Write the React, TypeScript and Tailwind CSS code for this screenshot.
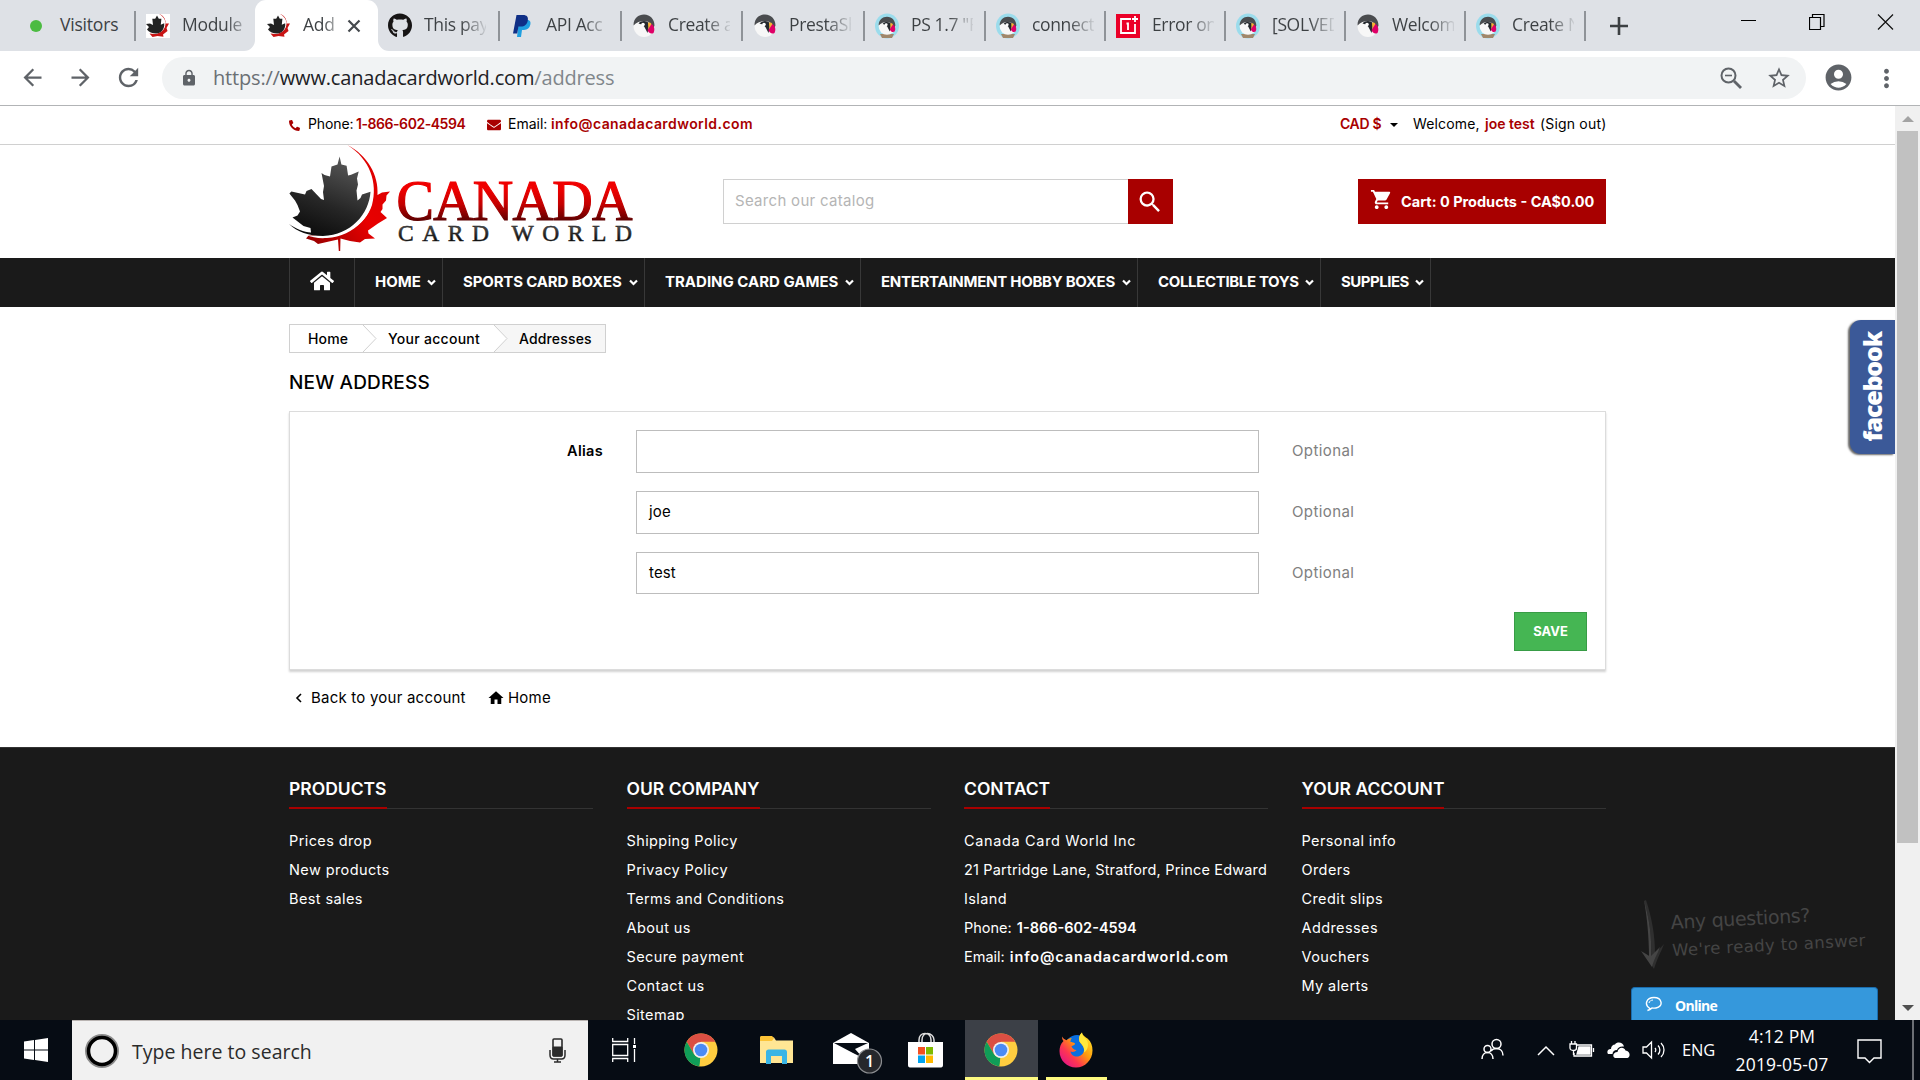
import { ReactNode } from "react";
import {
  MdAccountCircle,
  MdArrowBack,
  MdArrowForward,
  MdHome,
  MdLock,
  MdMoreVert,
  MdRefresh,
  MdSearch,
  MdShoppingCart,
  MdStarBorder,
} from "react-icons/md";
import { FaEnvelope, FaGithub, FaHome, FaPhone } from "react-icons/fa";

interface TabProps {
  title: string;
  icon: ReactNode;
  width: string;
}

/* ---------- Small drawings ---------- */

function LeafIcon() {
  return (
    <svg width="24" height="24" viewBox="0 0 24 24">
      <rect width="24" height="24" fill="#fff" />
      <path d="M13 0c6 3 8 10 4.500 15-2.500 4-8 6-14 4.500l3 3.500 5-1 6 .8-.5-2.300 4.500-3.500-1-3 2.500-4.500-3.500 0C20 5 17 1 13 0z" fill="#c81414" />
      <path d="M13 0c7 4 8 11 4.500 15.500-2.500 3-6.500 4.500-11 3.800 4 .2 8-1.500 10.200-4.300C20 11 19 4 13 0z" fill="#fff" />
      <path
        d="M11 1.500l1.800 3.200 2.600 0-.6 6 3.400-1.500c.6 6-3 10-8 10.300C6 19.500 3 18 1 15.500L3 13 0 10l4-.5 3 1.500L6.300 4.700l2.900 0z"
        fill="#222"
      />
    </svg>
  );
}

function PayPalIcon() {
  return (
    <svg width="18" height="22" viewBox="0 0 18 22">
      <path d="M6 5h8c3 0 4 2 3.300 4.800C16.500 13 14.500 15 11 15H9l-1 7H4z" fill="#1f9fe0" />
      <path d="M3.500 0H10c4 0 5.500 2.200 4.800 5.500C14 9.500 11.500 11.500 8 11.500H5.500L4.200 18.500H0z" fill="#0f2f86" />
    </svg>
  );
}

function PuffinIcon({ framed = false }: { framed?: boolean }) {
  return (
    <svg width="24" height="26" viewBox="0 0 24 26">
      {framed && <ellipse cx="12" cy="13" rx="12" ry="12.500" fill="#9bdcec" />}
      {framed && <path d="M5 21h14l-2 4H7z" fill="#a0876b" />}
      <g transform={framed ? "translate(2.400 2.600) scale(.8)" : undefined}>
        <ellipse cx="12" cy="13" rx="10.500" ry="11" fill="#f7f7f7" />
        <path d="M1.500 12.500C1.500 5 6.500 1.500 12 1.500c6.500 0 10.500 5 10.500 11l-1.500 4-4-7C14 7 6 7.500 1.500 12.500z" fill="#4a4c4f" />
        <path d="M6.500 10.500c3-3.500 9-3 11 .5l-2 9-2-4c-1-3-3.500-5-7-5.500z" fill="#24282d" />
        <circle cx="11" cy="11.500" r="1.800" fill="#fff" />
        <path d="M16 10c2-1 3.500 0 3.500 2l-3 5z" fill="#f8b334" />
        <path d="M15.500 17l4-6c3 2 3.500 6 2 9-2.500 1.500-5 0-6-3z" fill="#df0067" />
      </g>
    </svg>
  );
}

function OnePlusIcon() {
  return (
    <svg width="24" height="24" viewBox="0 0 24 24">
      <rect width="24" height="24" fill="#eb0028" />
      <path d="M15 5H5v14h14V10M19 2v6M16 5h6M10.500 9.500h1.500V16" fill="none" stroke="#fff" strokeWidth="1.800" />
    </svg>
  );
}

function ChromeIcon() {
  return (
    <svg width="34" height="34" viewBox="0 0 34 34">
      <circle cx="17" cy="17" r="16.500" fill="#ffcd40" />
      <path d="M2.700 8.700A16.500 16.500 0 0 1 31.300 8.700H17l-7.200 12.400z" fill="#db4f43" />
      <path d="M2.700 8.700l7.200 12.400c1.500 2.400 4 3.800 7.100 3.800l-1.500 8.600A16.500 16.500 0 0 1 2.700 8.700z" fill="#109d58" />
      <path d="M15.500 33.500l8.600-12.500L17 17z" fill="#ffcd40" />
      <circle cx="17" cy="17" r="8" fill="#f1f1f1" />
      <circle cx="17" cy="17" r="6.300" fill="#4c8bf5" />
    </svg>
  );
}

function FirefoxIcon() {
  return (
    <svg width="34" height="36" viewBox="0 0 34 36">
      <defs>
        <linearGradient id="fx" x1="0.900" y1="0.100" x2="0.100" y2="0.900">
          <stop offset="0" stopColor="#ffe226" />
          <stop offset=".4" stopColor="#ff980e" />
          <stop offset=".7" stopColor="#ff3750" />
          <stop offset="1" stopColor="#e31587" />
        </linearGradient>
      </defs>
      <circle cx="18" cy="15" r="12" fill="#0a6fe0" />
      <path
        d="M3 4.500c0 2 .6 3.500 1.500 4.500C1.500 12 .5 15.500.5 19 .5 28.500 8 35.500 17 35.500S33.500 28 33.500 18.500c0-5-1.500-8.500-4.500-11.500-2-2-5.500-3-6-6.500-3 2.500-3.500 6-2.500 9 2 3.500 5 5 4.500 9-.5 3.500-3.500 6-7 6s-6-2-6.500-5c2 1 4.500.5 6-1.500-3 0-4-2-5-3.500 1-1.500 3.500-1 3.500-3-1-1-3-1.500-4.500-1.500 0-1.500.3-3 1.500-4-2.500 0-4 1-5.500 2.200C5.500 7.500 4 6.500 3 4.500z"
        fill="url(#fx)"
      />
      <path d="M23 .5c-3 3-3.500 6-2.500 9 2.500 3 5.500 6 4.500 11 3-2 5-6 3.500-11C27 6 23 4 23 .5z" fill="#ffe83b" />
    </svg>
  );
}

function LogoMark() {
  return (
    <svg width="344" height="107" viewBox="0 0 344 107">
      <defs>
        <linearGradient id="leafDark" x1="0.700" y1="0" x2="0.300" y2="1">
          <stop offset="0" stopColor="#5a5a5a" />
          <stop offset=".6" stopColor="#262626" />
          <stop offset="1" stopColor="#0c0c0c" />
        </linearGradient>
        <linearGradient id="leafRed" x1="1" y1="0" x2="0" y2="1">
          <stop offset="0" stopColor="#d80000" />
          <stop offset=".5" stopColor="#e80000" />
          <stop offset="1" stopColor="#8c0000" />
        </linearGradient>
        <linearGradient id="wordRed" x1="0" y1="0" x2="0" y2="1">
          <stop offset=".3" stopColor="#ef0000" />
          <stop offset=".55" stopColor="#c40000" />
          <stop offset=".82" stopColor="#5a0000" />
        </linearGradient>
        <linearGradient id="wordDark" x1="0" y1="0" x2="0" y2="1">
          <stop offset=".3" stopColor="#4a4a4a" />
          <stop offset=".8" stopColor="#0a0a0a" />
        </linearGradient>
      </defs>
      <path
        d="M58.400 0C78 10 90 30 88.500 50l4.500-2.500 8-1-3.500 4-.5 5-3.500 4 0 4.500-2 3 6.500 6-9 5.500-10 7 .5 3 6.500 5-10 .5-5 3.500-10-1.500-9.500-2.500L51.200 106h-1.400L49 94.500l-9 2-11 2.500-4-3-8-2.500 3-3.500C50 94 75 84 83 60c6-22-2-46-24.600-60z"
        fill="url(#leafRed)"
      />
      <path d="M84 46c1 24-18 45-46 47-8 .6-15-.5-21-3l9 1c28-1 50-20 54-46z" fill="#fff" />
      <path
        d="M50.600 11.500l1.800 8 5.200 1.300 1.500 9.700 3-.7 7.600-3.300-1.700 7 1 6-1.500 6 1 10 3-2.500 1.500-3.500 8.500-2.700C80 69 62 90 34 91c-14 0-26-4-34-12 7 5 15 8 22 8.500l-.5-4.500-7-2-11-8.500 5-2 2.500-4-2.500-6.500-2.500-4.500L.4 48.500l2-2 13.600 3 1.500-3.500 5-2 9.500 10 3 1-1-8 1-6-2.500-13 3 2 5.500 1.500 1.500-10 6-2z"
        fill="url(#leafDark)"
      />
      <text
        x="107.500"
        y="75.300"
        textLength="236"
        fontFamily="Liberation Serif, serif"
        fontSize="56"
        fill="url(#wordRed)"
        stroke="url(#wordRed)"
        strokeWidth="1.200"
      >
        CANADA
      </text>
      <text
        x="109"
        y="95.500"
        textLength="234"
        fontFamily="Liberation Serif, serif"
        fontSize="23.500"
        fill="url(#wordDark)"
        stroke="#222"
        strokeWidth=".5"
      >
        CARD WORLD
      </text>
    </svg>
  );
}

/* ---------- Browser chrome ---------- */

const TABS: TabProps[] = [
  { title: "This pay", icon: <FaGithub size={25} color="#171515" />, width: "w-[122px]" },
  { title: "API Acc", icon: <PayPalIcon />, width: "w-[122px]" },
  { title: "Create a", icon: <PuffinIcon />, width: "w-[121px]" },
  { title: "PrestaSh", icon: <PuffinIcon />, width: "w-[122px]" },
  { title: 'PS 1.7 "F', icon: <PuffinIcon framed />, width: "w-[121px]" },
  { title: "connect", icon: <PuffinIcon framed />, width: "w-[120px]" },
  { title: "Error on", icon: <OnePlusIcon />, width: "w-[120px]" },
  { title: "[SOLVED", icon: <PuffinIcon framed />, width: "w-[120px]" },
  { title: "Welcom", icon: <PuffinIcon />, width: "w-[120px]" },
  { title: "Create N", icon: <PuffinIcon framed />, width: "w-[120px]" },
];

function Tab({ title, icon, width }: TabProps) {
  return (
    <div className={`${width} flex h-[30px] shrink-0 items-center border-r-2 border-[#8f9398] pl-[10px]`}>
      <span className="flex w-6 shrink-0 justify-center">{icon}</span>
      <span className="mb-0.5 ml-3 w-[62px] overflow-hidden whitespace-nowrap bg-linear-to-r from-[#3c4043] from-60% to-[#3c4043]/10 bg-clip-text text-[17.500px] tracking-[-0.350px] text-transparent">
        {title}
      </span>
    </div>
  );
}

function TabStrip() {
  return (
    <div className="flex h-[51px] items-center bg-[#dee1e6] text-[#3c4043]">
      <div className="flex h-[30px] w-[136px] shrink-0 items-center border-r-2 border-[#8f9398] pl-[30px]">
        <span className="h-3 w-3 rounded-full bg-[#4cbb42]" />
        <span className="mb-0.5 ml-[18px] text-[17.500px] tracking-[-0.200px]">Visitors</span>
      </div>
      <div className="flex w-[119px] shrink-0 items-center pl-[10px]">
        <LeafIcon />
        <span className="mb-0.5 ml-3 w-[62px] overflow-hidden whitespace-nowrap bg-linear-to-r from-[#3c4043] from-70% to-[#3c4043]/30 bg-clip-text text-[17.500px] tracking-[-0.300px] text-transparent">
          Module
        </span>
      </div>
      <div className="relative flex h-full w-[123px] shrink-0 items-center rounded-t-[11px] bg-white pl-3">
        <svg className="absolute -left-[11px] bottom-0" width="11" height="11" viewBox="0 0 11 11">
          <path d="M11 0v11H0A11 11 0 0 0 11 0z" fill="#fff" />
        </svg>
        <svg className="absolute -right-[11px] bottom-0" width="11" height="11" viewBox="0 0 11 11">
          <path d="M0 0v11h11A11 11 0 0 1 0 0z" fill="#fff" />
        </svg>
        <LeafIcon />
        <span className="mb-0.5 ml-3 w-[33px] overflow-hidden whitespace-nowrap bg-linear-to-r from-[#3c4043] from-60% to-[#3c4043]/40 bg-clip-text text-[17.500px] tracking-[-0.300px] text-transparent">
          Add
        </span>
        <svg className="ml-[11px]" width="14" height="14" viewBox="0 0 14 14">
          <path d="M1.500 1.500l11 11M12.500 1.500l-11 11" stroke="#45494d" strokeWidth="2.200" />
        </svg>
      </div>
      {TABS.map((tab) => (
        <Tab key={tab.title} {...tab} />
      ))}
      <svg className="ml-6 shrink-0" width="18" height="18" viewBox="0 0 18 18">
        <path d="M9 0v18M0 9h18" stroke="#3c4043" strokeWidth="2.600" />
      </svg>
      {/* Window controls */}
      <div className="mb-2 ml-auto flex items-center pr-[26px]">
        <svg width="16" height="18" viewBox="0 0 16 18">
          <path d="M0 7.500h15" stroke="#000" />
        </svg>
        <svg className="ml-[52px]" width="16" height="16" viewBox="0 0 16 16">
          <path d="M.5 3.500h11v12H.5zM3.500 3.500V.5h11.500v12h-3.500" fill="none" stroke="#000" strokeWidth="1.200" />
        </svg>
        <svg className="ml-[52px]" width="17" height="16" viewBox="0 0 17 16">
          <path d="M1 .5l15 15M16 .5l-15 15" stroke="#111" strokeWidth="1.200" />
        </svg>
      </div>
    </div>
  );
}

function Toolbar() {
  return (
    <div className="flex h-[55px] items-center border-b border-[#b2b4b6] bg-white text-[#5f6368]">
      <MdArrowBack className="ml-[19px] mb-0.5" size={27} />
      <MdArrowForward className="ml-[21px] mb-0.5" size={27} />
      <MdRefresh className="ml-[20px] mb-0.5" size={29} />
      <div className="ml-[19px] flex h-[42px] w-[1644px] shrink-0 items-center rounded-full bg-[#f1f3f4]">
        <MdLock className="ml-[18px]" size={18} />
        <div className="ml-[15px] w-[420px] whitespace-nowrap text-[20px] tracking-[-0.180px] text-[#80868b]">
          <span className="text-[#6b7074]">https://</span>
          <span className="text-[#202124]">www.canadacardworld.com</span>/address
        </div>
        <svg className="ml-auto" width="22" height="22" viewBox="0 0 22 22" fill="none" stroke="#5f6368">
          <circle cx="8.500" cy="8.500" r="7" strokeWidth="2" />
          <path d="M14 14l7 7" strokeWidth="2.800" />
          <path d="M5 8.500h7" strokeWidth="1.600" />
        </svg>
        <MdStarBorder className="mr-[14px] ml-[24px]" size={26} />
      </div>
      <MdAccountCircle className="ml-[17px] mb-0.5" size={31} />
      <MdMoreVert className="ml-[18px]" size={29} />
    </div>
  );
}

/* ---------- Shop header ---------- */

function TopBar() {
  return (
    <div className="h-[39px] border-b border-[#d0d0d0]">
      <div className="ml-[289px] flex h-[35px] w-[1317px] items-center whitespace-nowrap text-[14px]">
        <FaPhone className="mt-1 -scale-x-100" size={11} color="#a80000" />
        <span className="ml-2 w-12 tracking-[-0.100px]">Phone:</span>
        <span className="w-[131px] font-semibold tracking-[-0.450px] text-[#a80000]">1-866-602-4594</span>
        <FaEnvelope className="mt-0.5" size={14} color="#a80000" />
        <span className="ml-[7px] w-[43px]">Email:</span>
        <span className="font-semibold tracking-[0.420px] text-[#a80000]">info@canadacardworld.com</span>
        <span className="ml-auto w-[50px] font-semibold tracking-[-0.350px] text-[#a80000]">CAD $</span>
        <span className="mt-0.5 border-x-4 border-t-4 border-x-transparent border-t-black" />
        <span className="ml-[15px] w-[72px] tracking-[0.150px]">Welcome,</span>
        <span className="w-[55px] font-semibold text-[#a80000]">joe test</span>
        <span className="w-[66px] tracking-[0.180px]">(Sign out)</span>
      </div>
    </div>
  );
}

function ShopHeader() {
  return (
    <div className="ml-[289px] flex h-[113px] w-[1317px]">
      <LogoMark />
      <div className="mt-[34px] ml-[90px] flex h-[45px] w-[450px]">
        <div className="flex w-[405px] items-center border border-r-0 border-[#d0d0d0] pl-[11px] text-[15px] tracking-[0.300px] text-[#b5b5b5]">
          Search our catalog
        </div>
        <button className="flex w-[45px] items-center justify-center bg-[#a80000] pr-0.5 text-white">
          <MdSearch size={28} />
        </button>
      </div>
      <button className="mt-[34px] ml-auto flex h-[45px] w-[248px] items-center bg-[#a80000] pl-3 text-white">
        <MdShoppingCart className="mb-1" size={23} />
        <span className="ml-2 whitespace-nowrap text-[14.500px] font-bold">Cart: 0 Products - CA$0.00</span>
      </button>
    </div>
  );
}

const NAV_ITEMS = [
  { label: "HOME", width: "w-[88px]", tracking: "tracking-normal" },
  { label: "SPORTS CARD BOXES", width: "w-[202px]", tracking: "tracking-[-0.150px]" },
  { label: "TRADING CARD GAMES", width: "w-[216px]", tracking: "tracking-normal" },
  { label: "ENTERTAINMENT HOBBY BOXES", width: "w-[277px]", tracking: "tracking-[-0.280px]" },
  { label: "COLLECTIBLE TOYS", width: "w-[183px]", tracking: "tracking-[-0.350px]" },
  { label: "SUPPLIES", width: "w-[110px]", tracking: "tracking-[-0.500px]" },
];

function NavBar() {
  return (
    <nav className="h-[49px] bg-[#1a1a1a]">
      <div className="ml-[289px] flex h-full text-white">
        <div className="flex w-[66px] items-center justify-center border-x border-[#383838] pb-1">
          <FaHome size={24} />
        </div>
        {NAV_ITEMS.map((item) => (
          <div
            key={item.label}
            className={`${item.width} flex shrink-0 items-center justify-between border-r border-[#383838] pr-[6px] pl-5`}
          >
            <span className={`${item.tracking} whitespace-nowrap text-[15px] font-bold`}>{item.label}</span>
            <svg width="9" height="7" viewBox="0 0 9 7">
              <path d="M1 1.500l3.500 3.500L8 1.500" fill="none" stroke="#fff" strokeWidth="2.200" />
            </svg>
          </div>
        ))}
      </div>
    </nav>
  );
}

/* ---------- Page body ---------- */

function CrumbArrow({ last = false }: { last?: boolean }) {
  return (
    <svg width="14" height="27" viewBox="0 0 14 27">
      {last && <path d="M0 0h14v27H0L13 13.500z" fill="#f6f6f6" />}
      <path d="M0 0l13 13.500L0 27" fill="none" stroke="#d0d0d0" />
    </svg>
  );
}

function Breadcrumb() {
  return (
    <div className="flex h-[29px] w-[317px] items-center border border-[#d0d0d0] text-[14px] font-medium tracking-[0.150px] whitespace-nowrap">
      <span className="w-[73px] pl-[18px]">Home</span>
      <CrumbArrow />
      <span className="w-[117px] pl-[11px] tracking-[0.280px]">Your account</span>
      <CrumbArrow last />
      <span className="flex h-full flex-1 items-center bg-[#f6f6f6] pl-[11px]">Addresses</span>
    </div>
  );
}

const FIELDS = [
  { label: "Alias", value: "", height: "h-[43px]" },
  { label: "", value: "joe", height: "h-[43px]" },
  { label: "", value: "test", height: "h-[42px]" },
];

function AddressForm() {
  return (
    <div className="mt-[17px] h-[259px] border border-[#dcdcdc] px-[17px] pt-[18px] shadow-[0_2px_2px_rgba(0,0,0,0.18)]">
      {FIELDS.map((field, i) => (
        <div key={i} className={`${field.height} mb-[18px] flex items-center text-[15px]`}>
          <span className="mb-0.5 w-[296px] text-right text-[14.500px] font-semibold tracking-[0.300px]">
            {field.label}
          </span>
          <div className="ml-[33px] flex h-full w-[623px] items-center border border-[#bdbdbd] pl-3 tracking-[0.150px]">
            {field.value}
          </div>
          <span className="ml-[33px] tracking-[0.400px] text-[#808080]">Optional</span>
        </div>
      ))}
      <button className="mr-px ml-auto flex h-[39px] w-[73px] items-center justify-center border border-[#389c46] bg-[#45b653] text-[13px] font-bold text-white">
        SAVE
      </button>
    </div>
  );
}

function FacebookTab() {
  return (
    <div className="absolute top-[214px] right-0 flex h-[134px] w-[45px] items-center justify-center rounded-l-[11px] bg-[#3b5998] shadow-[-2px_1px_2px_rgba(0,0,0,0.6)]">
      <span className="-rotate-90 font-['Open_Sans',sans-serif] text-[25px] font-extrabold tracking-[-1.200px] text-white">
        facebook
      </span>
    </div>
  );
}

/* ---------- Footer ---------- */

function FooterColumn({ title, children }: { title: string; children: ReactNode }) {
  return (
    <div className="w-[304px] shrink-0 text-[14.500px] leading-[29px] tracking-[0.400px]">
      <div className="mb-[17px] flex h-[61px] items-end border-b border-[#333]">
        <h4 className="-mb-px flex h-[36px] items-center border-b-2 border-[#a80000] pb-1 text-[17.500px] font-semibold tracking-normal whitespace-nowrap">
          {title}
        </h4>
      </div>
      {children}
    </div>
  );
}

function LinkList({ items }: { items: string[] }) {
  return (
    <ul>
      {items.map((item) => (
        <li key={item}>{item}</li>
      ))}
    </ul>
  );
}

function Footer() {
  return (
    <footer className="h-[273px] overflow-hidden border-t border-[#333] bg-[#1a1a1a] text-white">
      <div className="ml-[289px] flex gap-[33.500px]">
        <FooterColumn title="PRODUCTS">
          <LinkList items={["Prices drop", "New products", "Best sales"]} />
        </FooterColumn>
        <FooterColumn title="OUR COMPANY">
          <LinkList
            items={[
              "Shipping Policy",
              "Privacy Policy",
              "Terms and Conditions",
              "About us",
              "Secure payment",
              "Contact us",
              "Sitemap",
            ]}
          />
        </FooterColumn>
        <FooterColumn title="CONTACT">
          <p className="tracking-[0.650px]">Canada Card World Inc</p>
          <p className="tracking-[0.180px] whitespace-nowrap">21 Partridge Lane, Stratford, Prince Edward</p>
          <p>Island</p>
          <p className="tracking-normal">
            Phone: <b className="ml-px font-semibold">1-866-602-4594</b>
          </p>
          <p className="tracking-normal">
            Email: <b className="ml-px font-semibold tracking-[0.850px]">info@canadacardworld.com</b>
          </p>
        </FooterColumn>
        <FooterColumn title="YOUR ACCOUNT">
          <LinkList items={["Personal info", "Orders", "Credit slips", "Addresses", "Vouchers", "My alerts"]} />
        </FooterColumn>
      </div>
    </footer>
  );
}

function ChatWidget() {
  return (
    <div className="absolute right-[17px] bottom-0 w-[247px]">
      <div className="flex h-[88px] pl-[10px] text-[#454545]">
        <svg className="shrink-0" width="26" height="73" viewBox="0 0 26 73">
          <path d="M5 1c6 18 9 36 9 54l9-10c-3 8-7 15-10 25L2 53l8 5C11 38 8 18 3 2z" fill="#2f2f2f" />
          <path d="M3 1c5 18 8 36 7 56l9-9c-3 8-6 12-8 20L0 52l8 5C8 38 6 18 3 1z" fill="#454545" />
        </svg>
        <div className="mt-1 ml-[5px] -rotate-[3deg] font-['Comic_Sans_MS','DejaVu_Sans',sans-serif] whitespace-nowrap">
          <div className="text-[19px] leading-[28px] tracking-[-0.350px]">Any questions?</div>
          <div className="mt-[3px] text-[16.500px] leading-[24px] tracking-[0.400px]">We're ready to answer</div>
        </div>
      </div>
      <div className="flex h-[33px] items-center rounded-t-[4px] border border-b-0 border-[#1a6daf] bg-[#3598dc] pl-[13px] text-white">
        <svg width="18" height="16" viewBox="0 0 18 16">
          <path d="M5 12.500C-1 9 1 1.500 9 1.500s10 9 2 10.500c-2 .4-3 0-4 0-1 1-2 2-4.500 2.500 1.500-.7 2-1.200 2.500-2z" fill="none" stroke="#fff" strokeWidth="1.400" />
          <path d="M4 7c.5-2 2-2.800 4-3" fill="none" stroke="#fff" />
        </svg>
        <span className="mt-0.5 ml-3 font-['Open_Sans',sans-serif] text-[14px] font-bold tracking-[-0.700px]">Online</span>
      </div>
    </div>
  );
}

function Scrollbar() {
  return (
    <div className="flex w-[25px] shrink-0 flex-col items-center bg-[#f0f0f0]">
      <span className="mt-[10px] border-x-[6px] border-b-[6px] border-x-transparent border-b-[#a3a3a3]" />
      <span className="mt-[9px] h-[712px] w-[21px] bg-[#c1c1c1]" />
      <span className="mt-auto mb-[9px] border-x-[6px] border-t-[6px] border-x-transparent border-t-[#505050]" />
    </div>
  );
}

/* ---------- Windows taskbar ---------- */

function Taskbar() {
  return (
    <div className="flex h-[60px] items-center bg-[#060c14] text-white">
      <svg className="ml-6" width="24" height="24" viewBox="0 0 24 24" fill="#fff">
        <path d="M0 3.400L10 2v9.500H0zM11 1.900L24 0v11.500H11zM0 12.500h10V22L0 20.600zM11 12.500h13V24l-13-1.900z" />
      </svg>
      <div className="ml-6 flex h-full w-[516px] items-center border-t border-[#b9b4b2] bg-[#f1f1f1] text-[#2b2b2b]">
        <svg className="ml-[13px]" width="34" height="34" viewBox="0 0 34 34" fill="none">
          <circle cx="17" cy="17" r="15.500" stroke="#8a8a8a" strokeWidth="3" />
          <circle cx="17" cy="17" r="13.500" stroke="#000" strokeWidth="3.500" />
        </svg>
        <span className="mt-0.5 ml-[13px] text-[19.500px] tracking-[0.020px]">Type here to search</span>
        <svg className="mr-[22px] ml-auto" width="17" height="25" viewBox="0 0 17 25" fill="none" stroke="#2b2b2b">
          <rect x="4" y="1" width="9" height="17" rx="1" strokeWidth="1.600" />
          <path d="M4 9h9v9H4z" fill="#2b2b2b" />
          <path d="M1 12v5c0 2.500 1 4 3.500 4h8c2.500 0 3.500-1.500 3.500-4v-5M8.500 21v3M5 24h7" strokeWidth="1.500" />
        </svg>
      </div>
      <svg className="ml-6" width="26" height="24" viewBox="0 0 26 24" fill="none" stroke="#fff" strokeWidth="1.300">
        <path d="M.7 0v3.500h15V0M.7 6.500h15v11h-15zM.7 24v-3.500h15V24M22.500 0v6M22.500 11v13" />
        <path d="M21 7h3v3h-3z" fill="#fff" stroke="none" />
      </svg>
      <span className="ml-[46px]">
        <ChromeIcon />
      </span>
      <svg className="ml-[42px]" width="33" height="29" viewBox="0 0 33 29">
        <path d="M0 1.500h14l2 3H33V27H0z" fill="#ffe694" />
        <path d="M0 1.500C0 .7.500 0 1.500 0H12l2 2-2 3H0z" fill="#fcc437" />
        <path d="M6 16c0-1.500 1-2.500 2.500-2.500h16c1.500 0 2.500 1 2.500 2.500v12h-5v-8h-11v8H6z" fill="#39b5e6" />
      </svg>
      <svg className="mt-2 ml-10" width="50" height="46" viewBox="0 0 50 46">
        <path d="M0 12L18 2l18 10v21H0z" fill="#fff" />
        <path d="M1 12h34L22 18l8 9-10-5z" fill="#060c14" />
        <circle cx="36.500" cy="30" r="12" fill="#26282c" stroke="#8c8e91" strokeWidth="1.200" />
        <text x="32" y="36" fontFamily="Open Sans, sans-serif" fontSize="16" fontWeight="600" fill="#fff">
          1
        </text>
      </svg>
      <svg className="ml-[25px]" width="35" height="36" viewBox="0 0 35 36">
        <path d="M11 12V8c0-4 2.500-6.500 6-6.500S23 4 23 8v4M14 12V8c0-4 2.500-6.500 5.500-6.500S26 4 26 8v4" fill="none" stroke="#ddd" strokeWidth="1.500" />
        <path d="M0 10h35v23c0 1.500-.6 2.500-2 2.500H2c-1.400 0-2-1-2-2.500z" fill="#fff" />
        <path d="M10 15h7v7.500h-7z" fill="#f25022" />
        <path d="M18 15h7v7.500h-7z" fill="#7fba00" />
        <path d="M10 23.500h7V31h-7z" fill="#00a4ef" />
        <path d="M18 23.500h7V31h-7z" fill="#ffb900" />
      </svg>
      <div className="ml-[22px] flex h-full w-[73px] items-center justify-center border-b-[3px] border-[#fdfa80] bg-[#3c4047] pt-[3px] pr-px">
        <ChromeIcon />
      </div>
      <div className="ml-2 flex h-full w-[61px] items-center justify-center border-b-[3px] border-[#fdfa80] pr-0.5 pt-0.5">
        <FirefoxIcon />
      </div>

      {/* System tray */}
      <svg className="ml-auto" width="24" height="24" viewBox="0 0 24 24" fill="none" stroke="#fff" strokeWidth="1.500">
        <circle cx="15.500" cy="6" r="4.500" />
        <circle cx="6.500" cy="11" r="3.500" />
        <path d="M1 21c0-4 2.500-6.500 5.500-6.500S12 17 12 21M10 13c1-1.500 3-2.500 5.500-2.500 4 0 6.500 3 6.500 7" />
      </svg>
      <svg className="ml-8" width="18" height="11" viewBox="0 0 18 11">
        <path d="M1 10l8-8 8 8" fill="none" stroke="#fff" strokeWidth="1.500" />
      </svg>
      <svg className="ml-[14px]" width="26" height="18" viewBox="0 0 26 18" fill="none" stroke="#fff" strokeWidth="1.300">
        <path d="M7 4h15.500v11H5v-3M24.500 7v4" />
        <path d="M10 6h11v7H8z" fill="#fff" />
        <path d="M2.500 0v3M6 0v3M1 3h6.500v4c0 1.500-1 2.500-3 2.500S1 8.500 1 7zM4.500 9.500V14" />
      </svg>
      <svg className="ml-[10px]" width="25" height="16" viewBox="0 0 25 16" fill="#fff">
        <path d="M3 12C1 9 4 6.500 6 7c0-3 2-4.500 4-4.500C12-.5 18 0 19 4.500c-4-.5-6 1-7 3.500-3 0-4.500 2-4.500 4z" />
        <path d="M10 16c-3-1-2-6 2.500-6C13 5 19 4 20.500 8.500 25 9 26 14.500 22.500 16z" />
      </svg>
      <svg className="ml-[12px]" width="24" height="20" viewBox="0 0 24 20" fill="none" stroke="#fff" strokeWidth="1.300">
        <path d="M1 7h3.500L9.500 2v16l-5-5H1zM13 8c1 1 1 3 0 4M16 5.500c2.500 2.500 2.500 6.500 0 9M19 3c4 4 4 10 0 14" />
      </svg>
      <span className="ml-[16px] w-[35px] text-[16.500px] tracking-[-0.200px]">ENG</span>
      <div className="ml-[16px] w-[98px] text-center text-[17.500px] leading-[28px] tracking-[0.150px] whitespace-nowrap">
        <div>4:12 PM</div>
        <div>2019-05-07</div>
      </div>
      <svg className="mt-0.5 ml-[26px]" width="25" height="25" viewBox="0 0 25 25" fill="none" stroke="#fff" strokeWidth="1.400">
        <path d="M1 1h23v18h-7l-4.500 4.500L8 19H1z" />
      </svg>
      <span className="mr-[6px] ml-[30px] h-full w-[2px] bg-[#6b6f74]" />
    </div>
  );
}

export default function App() {
  return (
    <div className="h-[1080px] w-[1920px] overflow-hidden bg-white font-['Open_Sans',sans-serif]">
      <TabStrip />
      <Toolbar />
      <div className="flex h-[914px]">
        <div className="relative w-[1895px] overflow-hidden font-['Inter',sans-serif] text-black">
          <TopBar />
          <ShopHeader />
          <NavBar />
          <main className="ml-[289px] h-[440px] w-[1317px] pt-[17px]">
            <Breadcrumb />
            <h1 className="mt-[16px] h-[25px] text-[19px] leading-[28px] font-medium tracking-[0.150px]">NEW ADDRESS</h1>
            <AddressForm />
            <div className="mt-[16px] flex h-6 items-center text-[15px] tracking-[0.220px]">
              <svg className="ml-[6px]" width="7" height="10" viewBox="0 0 7 10">
                <path d="M6 1L2 5l4 4" fill="none" stroke="#000" strokeWidth="1.600" />
              </svg>
              <span className="ml-[9px] w-[176px]">Back to your account</span>
              <MdHome size={18} />
              <span className="ml-[3px]">Home</span>
            </div>
          </main>
          <Footer />
          <FacebookTab />
          <ChatWidget />
        </div>
        <Scrollbar />
      </div>
      <Taskbar />
    </div>
  );
}
